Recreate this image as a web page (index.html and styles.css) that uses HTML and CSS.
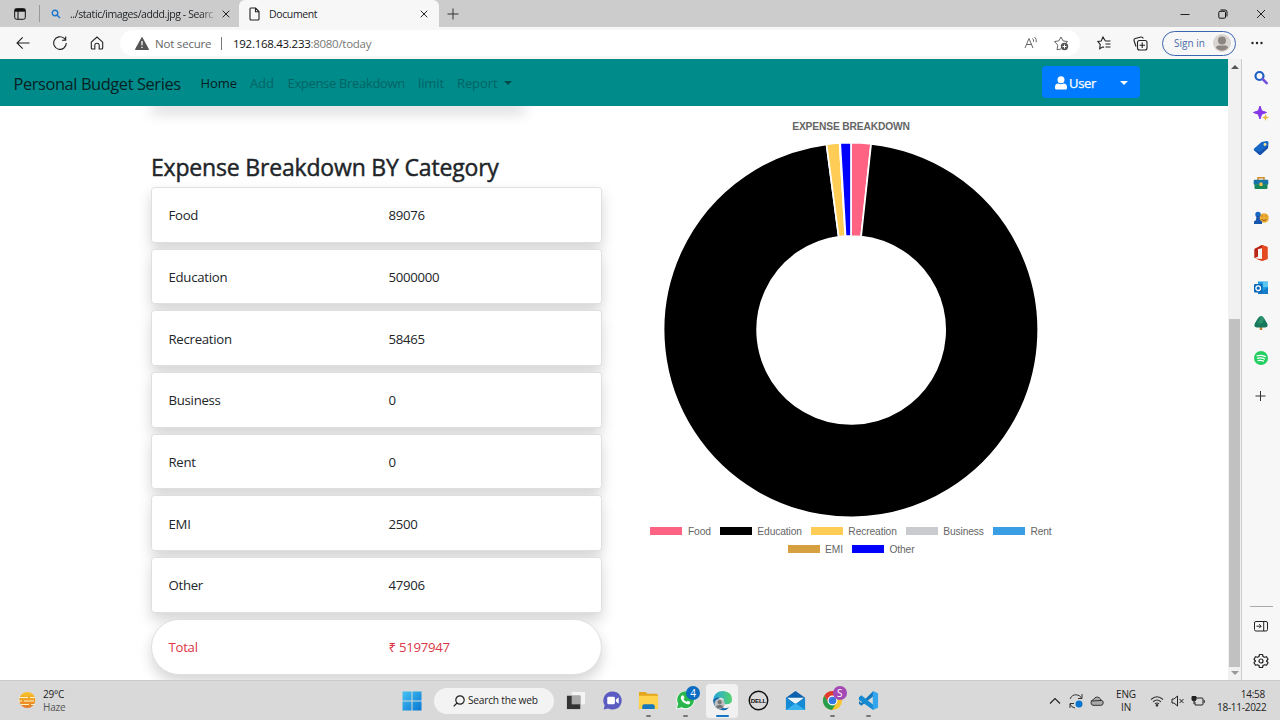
FILE: index.html
```html
<!DOCTYPE html>
<html lang="en">
<head>
<meta charset="utf-8">
<title>Document</title>
<link rel="stylesheet" href="styles.css">
</head>
<body>
<div class="screen">
  <header class="tabs">
    <svg class="tab-menu" width="12" height="12" viewBox="0 0 12 12" fill="none" stroke="#111"><rect x=".7" y=".7" width="10.6" height="10.6" rx="2"/><path d="M.7 2.2h10.6" stroke-width="3"/><path d="M4 3v8"/></svg>
    <span class="tab-sep"></span>
    <div class="tab tab-idle">
      <svg width="10" height="10" viewBox="0 0 10 10" fill="none" stroke="#1a75cf" stroke-width="1.4"><circle cx="4" cy="4" r="2.8"/><path d="M6 6l3 3"/></svg>
      <span class="tab-label fade">../static/images/addd.jpg - Searc</span>
      <svg class="x" width="8" height="8" viewBox="0 0 8 8" stroke="#222"><path d="M.7.7l6.6 6.6M7.3.7L.7 7.3"/></svg>
    </div>
    <div class="tab tab-active">
      <svg width="11" height="14" viewBox="0 0 11 14" fill="none" stroke="#222" stroke-width="1.1"><path d="M1.6 1h5L10 4.500V12q0 1-1 1H2q-1 0-1-1V2q0-1 .6-1zM6.500 1v3.700H10"/></svg>
      <span class="tab-label">Document</span>
      <svg class="x" width="8" height="8" viewBox="0 0 8 8" stroke="#222"><path d="M.7.7l6.600 6.600M7.300.7L.7 7.300"/></svg>
    </div>
    <svg class="new-tab" width="12" height="12" viewBox="0 0 12 12" stroke="#333"><path d="M6 .5v11M.5 6h11"/></svg>
    <div class="window-buttons">
      <svg width="10" height="10" viewBox="0 0 10 10" stroke="#222"><path d="M.5 5.500h9"/></svg>
      <svg width="10" height="10" viewBox="0 0 10 10" fill="none" stroke="#111"><rect x=".8" y="2.300" width="6.700" height="6.900" rx="1.200"/><path d="M2.500 1h4.700Q9 1 9 3v4.500"/></svg>
      <svg width="10" height="10" viewBox="0 0 10 10" stroke="#222"><path d="M1 1l8 8M9 1L1 9"/></svg>
    </div>
  </header>

  <div class="toolbar">
    <div class="nav-icons">
      <svg width="14" height="14" viewBox="0 0 14 14" fill="none" stroke="#222" stroke-width="1.100"><path d="M13.500 7H1M6.700 1.300L1 7l5.700 5.700"/></svg>
      <svg width="14" height="14" viewBox="0 0 14 14" fill="none" stroke="#222" stroke-width="1.100"><path d="M13.300 7A6.300 6.300 0 1 1 11 2.200L12.600 4M12.700.6V4.200H9"/></svg>
      <svg width="14" height="14" viewBox="0 0 14 14" fill="none" stroke="#222" stroke-width="1.100"><path d="M1.300 6.200L7 1l5.700 5.200V12q0 1-1 1H9.200V9Q9 7.200 7 7.200T4.800 9v4H2.300q-1 0-1-1z"/></svg>
    </div>
    <div class="address">
      <svg width="14" height="13" viewBox="0 0 14 13"><path d="M7 .5L13.600 12.500H.4z" fill="#555" stroke="#555" stroke-linejoin="round"/><path d="M7 4v4.200M7 9.700v1.400" stroke="#fff" stroke-width="1.300"/></svg>
      <span class="insecure">Not secure</span>
      <span class="addr-sep"></span>
      <span class="url"><b>192.168.43.233</b>:8080/today</span>
      <span class="address-tools">
        <svg width="14" height="14" viewBox="0 0 14 14" fill="none" stroke="#666"><path d="M1 12L5 2.500 9 12M2.500 8.500h5M8.500 2.500q1.500 1.200 1 3.300M10.500 1q2.500 2 1.700 5.200"/></svg>
        <svg width="16" height="16" viewBox="0 0 16 16" fill="none" stroke="#666"><path d="M8 14l-4 .7.8-4.500L1.500 6.500l4.300-.6L8 2l2.100 3.900 4.400.6-1.500 1.700"/><circle cx="11.500" cy="11.500" r="3.700" fill="#555" stroke="none"/><path d="M11.500 9.500v4M9.500 11.500h4" stroke="#fff"/></svg>
      </span>
    </div>
    <svg class="fav" width="14" height="14" viewBox="0 0 14 14" fill="none" stroke="#222" stroke-width="1.100"><path d="M8.200 4.700L6 1 4.200 5 .8 5.400l2.400 3-.5 4.300L6 10.800l1 .7M8.200 5h5.300M8.500 8h5M8.500 11h5"/></svg>
    <svg class="coll" width="15" height="15" viewBox="0 0 15 15" fill="none" stroke="#222" stroke-width="1.100"><rect x="4.500" y="4.500" width="9.500" height="9.500" rx="2"/><path d="M9.200 6.500v5.500M6.500 9.200H12M3 10.500L1 4.500Q.7 3 2.200 2.500L8 1q1.800-.2 2.300 1.500"/></svg>
    <div class="signin">Sign in
      <svg width="18" height="18" viewBox="0 0 18 18"><circle cx="9" cy="9" r="9" fill="#d8d4d0"/><circle cx="9" cy="6.500" r="4" fill="#8b8680"/><path d="M3 14q0-2.500 3-2.500h6q3 0 3 2.500-6 5.500-12 0z" fill="#8b8680"/></svg>
    </div>
    <svg class="more" width="12" height="4" viewBox="0 0 12 4" fill="#222"><circle cx="1.500" cy="2" r="1.200"/><circle cx="6" cy="2" r="1.200"/><circle cx="10.500" cy="2" r="1.200"/></svg>
  </div>

  <div class="middle">
    <main class="page">
      <nav class="navbar">
        <span class="brand">Personal Budget Series</span>
        <span class="link home">Home</span>
        <span class="link add">Add</span>
        <span class="link breakdown">Expense Breakdown</span>
        <span class="link limit">limit</span>
        <span class="link report">Report</span><i class="caret"></i>
        <div class="user">
          <svg width="12" height="14" viewBox="0 0 12 14" fill="#fff"><circle cx="6" cy="3.700" r="3.500"/><path d="M0 12V11q0-3.200 3.400-3.400Q6 9 8.600 7.600 12 7.800 12 11v1q0 1.500-1.300 1.500H1.300Q0 13.500 0 12z"/></svg>
          <span>User</span><i class="caret"></i>
        </div>
      </nav>
      <div class="content">
        <section class="left">
          <div class="previous"></div>
          <h2>Expense Breakdown BY Category</h2>
          <div class="card"><span>Food</span><span>89076</span></div>
          <div class="card"><span>Education</span><span>5000000</span></div>
          <div class="card"><span>Recreation</span><span>58465</span></div>
          <div class="card"><span>Business</span><span>0</span></div>
          <div class="card"><span>Rent</span><span>0</span></div>
          <div class="card"><span>EMI</span><span>2500</span></div>
          <div class="card"><span>Other</span><span>47906</span></div>
          <div class="card total"><span>Total</span><span>₹ 5197947</span></div>
        </section>
        <section class="chart">
          <h3>EXPENSE BREAKDOWN</h3>
          <svg class="donut" width="376" height="376" viewBox="-188 -188 376 376" stroke="#fff" stroke-width="1.700">
            <path fill="#ff6384" d="M0-187.300A187.300 187.300 0 0 1 20.100-186.200L10.100-93.500A94 94 0 0 0 0-94z"/>
            <path fill="#000" d="M20.100-186.200A187.300 187.300 0 1 1-24.500-185.700L-12.300-93.200A94 94 0 1 0 10.100-93.500z"/>
            <path fill="#ffcd56" d="M-24.500-185.700A187.300 187.300 0 0 1-11.400-187L-5.700-93.800A94 94 0 0 0-12.300-93.200z"/>
            <path fill="#d69f40" d="M-11.400-187L-10.800-187-5.400-93.800-5.700-93.800z"/>
            <path fill="#00f" d="M-10.800-187A187.300 187.300 0 0 1 0-187.300V-94A94 94 0 0 0-5.400-93.800z"/>
          </svg>
          <div class="legend">
            <span><i class="food"></i>Food</span><span><i class="education"></i>Education</span><span><i class="recreation"></i>Recreation</span><span><i class="business"></i>Business</span><span><i class="rent"></i>Rent</span>
          </div>
          <div class="legend">
            <span><i class="emi"></i>EMI</span><span><i class="other"></i>Other</span>
          </div>
        </section>
      </div>
    </main>
    <div class="scrollbar"><i class="up"></i><div class="thumb"></div><i class="down"></i></div>
    <aside class="sidebar">
      <svg viewBox="0 0 16 16" fill="none"><circle cx="6.500" cy="6" r="4" stroke="#1b5fc4" stroke-width="2.200"/><path d="M9.700 9.200l4 4" stroke="#7050d8" stroke-width="2.600" stroke-linecap="round"/></svg>
      <svg viewBox="0 0 16 16"><path d="M7 1l1.700 4.800L13.500 7.500 8.700 9.200 7 14 5.300 9.200.5 7.500l4.800-1.700z" fill="#8436e8" stroke="#8436e8" stroke-linejoin="round"/><path d="M12.500 9l.9 2.600 2.600.9-2.600.9-.9 2.600-.9-2.600-2.600-.9 2.600-.9z" fill="#e9b83b"/></svg>
      <svg viewBox="0 0 16 16"><path d="M8.500 2l5.500-1q1.500 0 1.500 1.500L15 8l-7 6.500q-1 .8-2 0L1.200 10.500q-1-1 0-2z" fill="#1767c8"/><path d="M1 9.500l5 5q1 .8 2 0L15 8l.2-2.500L7 12z" fill="#164fa8"/><circle cx="12" cy="4.500" r="1.400" fill="#ffe487"/></svg>
      <svg viewBox="0 0 16 16"><path d="M5 5V2.700h6V5" fill="none" stroke="#d58b25" stroke-width="1.500"/><rect x=".7" y="4.700" width="14.600" height="5" rx="1" fill="#1674a5"/><path d="M1.500 9.300h13V13q0 1-1 1h-11q-1 0-1-1z" fill="#16865d"/><path d="M6.500 7.500h3v3.500h-3z" fill="#f4c34b"/></svg>
      <svg viewBox="0 0 16 16"><circle cx="11" cy="8" r="4.800" fill="#efac32"/><path d="M8.500 6h1M12.500 6h1M8.500 9.500q2.500 2 5 0" stroke="#8b5b1d" fill="none"/><circle cx="5" cy="4.500" r="2.700" fill="#1766c1"/><path d="M3.500 6h3l.5 4 2 1.500V14H1v-2.500L3 10z" fill="#1555ae"/></svg>
      <svg viewBox="0 0 16 16"><path d="M9 0l5.500 2v12L9 16l-7-2.500 7 .5V3L5 4v7.500L1.500 13V4z" fill="#dc3e15"/><path d="M9 0l5.500 2v12L9 16z" fill="#e64b20"/><path d="M1.500 4L9 0v3L5 4v7.500L1.500 13z" fill="#b92516"/></svg>
      <svg viewBox="0 0 16 16"><path d="M5 1.500h10V14H5z" fill="#1d9ce3"/><path d="M10 2h5v5h-5z" fill="#59c7ef"/><path d="M5 8l5 3 5-4v7H5z" fill="#147bc8"/><rect x="1" y="4" width="8.500" height="8.500" rx="1" fill="#0968b7"/><circle cx="5.200" cy="8.200" r="2.300" fill="none" stroke="#fff" stroke-width="1.300"/></svg>
      <svg viewBox="0 0 16 16"><path d="M6.800 11h2.400v4H6.800z" fill="#be7a25"/><path d="M8 1q1.800 0 3.500 3L14.200 8.500q1.500 3.500-2 4H3.800q-3.500-.5-2-4L4.500 4Q6.200 1 8 1z" fill="#15775c"/><path d="M8 1q1.800 0 3.500 3L9 8.500H4.500z" fill="#2a936c"/></svg>
      <svg viewBox="0 0 16 16"><circle cx="8" cy="8" r="7" fill="#23cf5f"/><path d="M4 5.800q4.500-1.200 8.300.8M4.500 8.300q3.800-1 7 .7M5 10.600q3-.8 5.500.5" fill="none" stroke="#fff" stroke-width="1.200" stroke-linecap="round"/></svg>
      <svg class="plus" viewBox="0 0 16 16" stroke="#333"><path d="M7.500 3v10M2.500 8h10"/></svg>
      <span class="side-line"></span>
      <svg class="panel-icon" viewBox="0 0 16 16" fill="none" stroke="#222"><rect x="1.500" y="3.500" width="13" height="9.500" rx="1.500"/><path d="M10.700 3.500V13M3.500 8.200H8M6.200 6.200l2 2-2 2"/></svg>
      <svg class="gear" viewBox="0 0 16 16" fill="none" stroke="#222" stroke-width="1.200"><path d="M6.500 1.500h3l.5 2 1.500.8 2-.6L15 6.300 13.500 8 15 9.700l-1.500 2.600-2-.6-1.500.8-.5 2h-3l-.5-2-1.500-.8-2 .6L1 9.700 2.500 8 1 6.300l1.500-2.600 2 .6L6 3.500z" stroke-linejoin="round"/><circle cx="8" cy="8" r="2"/></svg>
    </aside>
  </div>

  <footer class="taskbar">
    <div class="weather">
      <svg width="18" height="18" viewBox="0 0 18 18"><defs><linearGradient id="sun" x2="0" y2="1"><stop stop-color="#fac62c"/><stop offset="1" stop-color="#e57722"/></linearGradient></defs><circle cx="9.300" cy="8" r="8" fill="url(#sun)"/><path d="M1 5.500h9M12 5.500h5M0 9h4M6 9h10M3 12.500h8M13 12.500h4" stroke="#fff1c7" stroke-width="1"/></svg>
      <div>29°C<br><span>Haze</span></div>
    </div>
    <div class="apps">
      <svg class="start" width="20" height="20" viewBox="0 0 20 20"><defs><linearGradient id="win" x2="1" y2="1"><stop stop-color="#45c3f3"/><stop offset="1" stop-color="#0876d1"/></linearGradient></defs><path fill="url(#win)" d="M.5.500h9v9h-9zM10.500.500h9v9h-9zM.500 10.500h9v9h-9zM10.500 10.500h9v9h-9z"/></svg>
      <div class="search"><svg width="12" height="12" viewBox="0 0 12 12" fill="none" stroke="#222" stroke-width="1.200"><circle cx="7" cy="5" r="4.200"/><path d="M4 8L.7 11.300"/></svg>Search the web</div>
      <div class="app"><svg viewBox="0 0 22 22"><path d="M7 2h14v13H7z" fill="#f4f4f4"/><path d="M2 6h14v14H2z" fill="#333"/><path d="M7 6h9v9H7z" fill="#aaa"/></svg></div>
      <div class="app"><svg viewBox="0 0 22 22"><path d="M11 1.500A9.500 9.500 0 1 1 6.500 19.300L1.800 20.500l1-4.500A9.500 9.500 0 0 1 11 1.500z" fill="#5b5cc2"/><rect x="5.500" y="7" width="8" height="8" rx="1.500" fill="#fff"/><path d="M14.500 10L17.500 7.500v7l-3-2.500z" fill="#fff"/></svg></div>
      <div class="app run"><svg viewBox="0 0 22 22"><path d="M1 3q0-1 1-1h6l2 2h9q2 0 2 2v14H1z" fill="#e5a61e"/><path d="M1 6h20v12q0 2-2 2H3q-2 0-2-2z" fill="#ffd34e"/><path d="M4.500 20v-3q0-2 2-2h9q2 0 2 2v3z" fill="#1677bd"/></svg></div>
      <div class="app run"><svg viewBox="0 0 22 22"><path d="M1 20.500L2.500 15A9.500 9.500 0 1 1 6.500 19z" fill="#fff"/><path d="M2 19.500l1.400-5A8.800 8.800 0 1 1 7 18z" fill="#29b64a"/><path d="M7 6q1.500-1.500 2.500 1l.5 1-1 1.500q1 2 3.200 2.900l1.300-1.100 2.500 1.200q0 3-3 2.500-6-1.500-7-6.500 0-1.500 1-2.500z" fill="#fff"/></svg><span class="badge blue">4</span></div>
      <div class="app current"><svg viewBox="0 0 22 22"><defs><linearGradient id="edge" x2="1"><stop stop-color="#23a5df"/><stop offset="1" stop-color="#55d36b"/></linearGradient></defs><path d="M1 11Q2 1 12 1q9 1 9 9 0 5-6 5-3 0-2.500-3 .5-4-4-4Q3 8 1 11z" fill="url(#edge)"/><path d="M1 11q2-4 7-3-4 4-1 8 4 5 11 2-3 4-8 3-8-1-9-10z" fill="#1566ad"/><circle cx="8" cy="14.500" r="5.500" fill="#bfc0c1"/><circle cx="8" cy="12.700" r="2.300" fill="#777"/><path d="M4 18q1-2.500 4-2.500t4 2.500q-4 3-8 0z" fill="#777"/></svg></div>
      <div class="app"><svg viewBox="0 0 22 22"><circle cx="11" cy="11" r="9.700" fill="none" stroke="#111" stroke-width="1.500"/><text x="11" y="13.500" text-anchor="middle" class="dell">DELL</text></svg></div>
      <div class="app"><svg viewBox="0 0 22 22"><path d="M1 8L11 1l10 7v13H1z" fill="#0b61ad"/><path d="M2 8h18l-9 7z" fill="#eaf5fb"/><path d="M1 8l10 7L21 8v13H1z" fill="#168bd5"/><path d="M1 21l10-7 10 7z" fill="#39b3ed"/></svg></div>
      <div class="app run"><svg viewBox="0 0 22 22"><circle cx="11" cy="11" r="10" fill="#fac52b"/><path d="M2.300 6A10 10 0 0 1 19.700 6H11L7 13.500z" fill="#df3c31"/><path d="M2.300 6A10 10 0 0 0 10.500 21L15 13.500H7z" fill="#279d4c"/><circle cx="11" cy="11" r="5.200" fill="#fff"/><circle cx="11" cy="11" r="4" fill="#3478df"/></svg><span class="badge purple">S</span></div>
      <div class="app run"><svg viewBox="0 0 22 22"><path d="M16 1L3.500 13.500 1 11.500v3l2.500 2L16 6.500z" fill="#1477bc"/><path d="M1 7.500l2.500-2L16 15.500V21L1 10.500z" fill="#168bd3"/><path d="M15.500 1L21 3.500v15L15.500 21z" fill="#34a6ed"/></svg></div>
    </div>
    <div class="tray">
      <svg width="12" height="14" viewBox="0 0 12 14" fill="none" stroke="#222" stroke-width="1.100"><path d="M1 9.500l5-5 5 5"/></svg>
      <svg class="sync" width="16" height="16" viewBox="0 0 16 16" fill="none" stroke="#333"><path d="M2 6Q4 1.500 8.500 1.800 12 2 13.500 5M14 1v4.500h-4M2 15v-4.500h4M2 11q1.500 3.500 5 4"/><circle cx="11" cy="11" r="3.500" fill="#0875ce" stroke="none"/></svg>
      <svg class="cloud" width="14" height="10" viewBox="0 0 14 10" fill="#aaa" stroke="#333"><path d="M1 6.500q0-2.500 2.500-3Q6-.5 9.500 2q1 .5 1.300 2 2.700.5 2.400 3Q13 9.300 11 9.300H3Q1 9.300 1 6.500zM1.500 5l9.500-.5"/></svg>
      <div class="lang">ENG<br>IN</div>
      <svg class="wifi" width="14" height="12" viewBox="0 0 14 12" fill="none" stroke="#333" stroke-width="1.100"><path d="M1 4.500q6-5.500 12 0M3 6.800q4-3.500 8 0M5 8.800q2-1.700 4 0"/><circle cx="7" cy="10.300" r=".8" fill="#333"/></svg>
      <svg class="mute" width="13" height="12" viewBox="0 0 13 12" fill="none" stroke="#222"><path d="M1 4h2l3.500-3v10L3 8H1zM8.500 4l4 4M12.500 4l-4 4"/></svg>
      <svg class="battery" width="14" height="12" viewBox="0 0 14 12" fill="none" stroke="#222"><path d="M5 3h6q1 0 1 1v5q0 1-1 1H4V7M13.200 5v3"/><path d="M1 1.500h4V5q-2 2-4 0zM3 6v3" fill="#222"/></svg>
      <div class="clock">14:58<br>18-11-2022</div>
    </div>
  </footer>
</div>
</body>
</html>
```
FILE: styles.css
```css
* { box-sizing: border-box; }
body { margin: 0; font-family: "Open Sans", "Noto Sans", sans-serif; color: #212529; }
svg { display: block; flex: none; }
.screen { width: 1280px; height: 720px; display: flex; flex-direction: column; overflow: hidden; white-space: nowrap; }

.tabs { height: 27px; background: #ccc; display: flex; align-items: center; font-size: 10.500px; flex: none; }
.tab-menu { margin-left: 14px; }
.tab-sep { width: 1px; height: 17px; background: #999; margin-left: 13px; }
.tab { height: 27px; display: flex; align-items: center; }
.tab-idle { width: 199px; padding: 0 9px 0 11px; }
.tab-active { width: 200px; padding: 0 11px 0 10px; background: #f7f7f7; border-radius: 6px 6px 0 0; }
.tab-label { flex: 1; margin-left: 9px; }
.tab-active .tab-label { letter-spacing: -.38px; }
.fade { margin-right: 7px; letter-spacing: -.4px; -webkit-mask-image: linear-gradient(90deg, #000 90%, rgba(0,0,0,.2)); mask-image: linear-gradient(90deg, #000 90%, rgba(0,0,0,.2)); }
.new-tab { margin-left: 8px; }
.window-buttons { margin-left: auto; margin-right: 14px; display: flex; gap: 28px; }

.toolbar { height: 32px; background: #f7f7f7; display: flex; align-items: center; flex: none; font-size: 11.500px; }
.nav-icons { display: flex; gap: 23px; margin-left: 16px; width: 104px; }
.address { width: 960px; height: 26px; border-radius: 13px; background: #fff; display: flex; align-items: center; padding: 0 11px 0 15px; color: #666; }
.insecure { margin-left: 6px; width: 66px; letter-spacing: -.2px; }
.addr-sep { width: 1px; height: 13px; background: #777; margin-right: 11px; }
.url { color: #777; letter-spacing: -.28px; }
.url b { color: #111; font-weight: 400; }
.address-tools { margin-left: auto; display: flex; align-items: center; gap: 15px; }
.fav { margin-left: 17px; }
.coll { margin-left: 22px; }
.signin { margin-left: 14px; width: 74px; height: 25px; border: 1.5px solid #3c65b2; border-radius: 13px; display: flex; align-items: center; justify-content: space-between; padding: 0 4px 0 11px; color: #4a6baa; font-size: 10px; }
.more { margin-left: 15px; }

.middle { height: 621px; display: flex; flex: none; }
.page { width: 1228px; background: #fff; overflow: hidden; }
.navbar { height: 47px; background: #008b8b; display: flex; align-items: center; padding: 1px 0 0 13.500px; font-size: 13px; color: #006464; position: relative; z-index: 1; }
.brand { font-size: 16.400px; width: 187px; color: #062222; letter-spacing: -.4px; }
.home { width: 49.500px; color: #041c1c; }
.add { width: 37.500px; }
.breakdown { width: 130.500px; }
.limit { width: 39px; }
.report { width: 46.500px; }
.link { letter-spacing: -.1px; }
.navbar .breakdown { letter-spacing: -.33px; }
.caret { border: 4px solid transparent; border-top-color: currentColor; border-bottom: 0; }
.report + .caret { color: #004a4a; }
.user { margin-left: auto; margin-right: 88.500px; width: 98px; height: 32px; margin-top: -2px; background: #007bff; border-radius: 4px; display: flex; align-items: center; color: #fff; padding: 1px 12px 0 13px; }
.user span { margin-left: 2.500px; letter-spacing: -.35px; -webkit-text-stroke: .25px currentColor; }
.user .caret { margin-left: auto; }
.content { display: flex; }
.left { width: 450.500px; margin-left: 151px; }
.previous { width: 374px; height: 10px; margin-top: -10px; box-shadow: 0 7px 14px rgba(0,0,0,.17); }
h2 { margin: 46px 0 5px; font-size: 23px; font-weight: 400; line-height: 30px; letter-spacing: -.18px; -webkit-text-stroke: .45px currentColor; }
.card { height: 55.700px; margin-bottom: 6px; border: 1px solid #dfdfdf; border-radius: 3.500px; background: #fff; box-shadow: 0 7px 14px rgba(0,0,0,.17); display: grid; grid-template-columns: 220px 1fr; align-items: center; padding: 1px 0 0 16.500px; font-size: 13.200px; letter-spacing: -.27px; }
.total { border-radius: 28px; color: #dc3545; }
.chart { width: 410px; margin-left: 44.500px; display: flex; flex-direction: column; align-items: center; font-family: "Liberation Sans", Arial, sans-serif; color: #666; }
h3 { margin: 14px 0 0; font-size: 10.250px; line-height: 14px; letter-spacing: -.16px; }
.donut { margin-top: 8px; }
.legend { display: flex; gap: 9px; font-size: 10.250px; height: 18px; align-items: center; margin-top: 4px; letter-spacing: -.12px; }
.legend + .legend { margin-top: 0; }
.legend span { display: flex; align-items: center; gap: 5.500px; }
.legend i { width: 32px; height: 8.500px; }
.food { background: #ff6384; }
.education { background: #000; }
.recreation { background: #ffcd56; }
.business { background: #c9cbcf; }
.rent { background: #3a9ee5; }
.emi { background: #d69f40; }
.other { background: #00f; }

.scrollbar { width: 13px; background: #f1f1f1; display: flex; flex-direction: column; align-items: center; }
.up { margin-top: 6px; border: 4px solid transparent; border-top: 0; border-bottom-color: #555; }
.thumb { width: 11px; height: 348px; background: #c1c1c1; margin-top: 250px; }
.down { margin-top: 4px; border: 4px solid transparent; border-bottom: 0; border-top-color: #999; }
.sidebar { width: 39px; background: #f7f7f7; border-left: 1px solid #ccc; display: flex; flex-direction: column; align-items: center; gap: 19px; padding-top: 11px; }
.sidebar svg { width: 16px; height: 16px; }
.sidebar .plus { margin-top: 3px; }
.side-line { height: 1px; width: 23px; background: #aaa; margin-top: 183px; flex: none; }
.sidebar .panel-icon { margin-top: -8px; }

.taskbar { height: 40px; background: #d9d9d9; border-top: 1px solid #ccc; display: flex; align-items: center; flex: none; font-size: 10px; line-height: 13px; color: #222; }
.weather { width: 402px; padding-left: 18px; display: flex; align-items: center; gap: 7px; letter-spacing: -.2px; }
.weather span { color: #555; }
.apps { display: flex; align-items: center; }
.search { width: 120px; height: 26px; margin: 0 3px 0 12px; border-radius: 13px; background: #f3f3f3; display: flex; align-items: center; padding-left: 19px; gap: 3px; font-size: 10.200px; letter-spacing: -.23px; }
.app { width: 36.700px; height: 34px; display: flex; align-items: center; justify-content: center; position: relative; }
.app > svg { width: 21px; height: 21px; }
.run::after, .current::after { content: ""; position: absolute; bottom: 1px; width: 5px; height: 2px; border-radius: 1px; background: #777; }
.current { background: #f1f1f1; border-radius: 4px; width: 32.700px; margin: 0 2px; }
.current::after { width: 13px; background: #1475c5; }
.badge { position: absolute; left: 19px; top: 2px; width: 14px; height: 14px; border-radius: 50%; color: #fff; font-size: 10px; line-height: 14px; text-align: center; }
.blue { background: #0b6cc4; }
.purple { background: #a448b6; }
.dell { font: bold 6.500px "Liberation Sans", sans-serif; letter-spacing: -.2px; fill: #111; }
.tray { margin-left: auto; padding-right: 15px; display: flex; align-items: center; }
.sync { margin-left: 7px; }
.cloud { margin-left: 6px; }
.lang { width: 28px; margin-left: 8px; text-align: center; letter-spacing: -.1px; }
.wifi { margin-left: 10px; }
.mute { margin-left: 7px; }
.battery { margin-left: 7px; }
.clock { width: 48px; margin-left: 12px; text-align: right; letter-spacing: -.27px; }
```
